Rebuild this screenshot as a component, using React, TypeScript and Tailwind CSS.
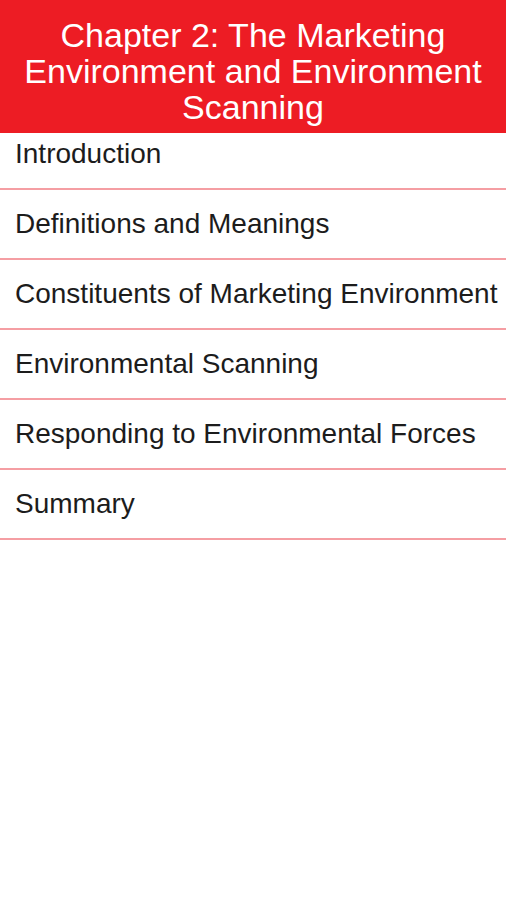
const topics = [
  "Definitions and Meanings",
  "Constituents of Marketing Environment",
  "Environmental Scanning",
  "Responding to Environmental Forces",
  "Summary",
];

export default function App() {
  return (
    <div className="min-h-[900px] w-full bg-white font-['Liberation_Sans',Arial,sans-serif]">
      <header className="h-[133px] bg-[#ed1c24] px-1 pt-[17px] text-center text-[34px] leading-[36px] text-white">
        Chapter 2: The Marketing Environment and Environment Scanning
      </header>
      <ul>
        <li className="h-[57px] border-b-2 border-[#f59ea3] pl-[15px] pt-[3px] text-[28px] leading-[36px] text-[#1c1c1c]">
          Introduction
        </li>
        {topics.map((t) => (
          <li
            key={t}
            className="flex h-[70px] items-center whitespace-nowrap border-b-2 border-[#f59ea3] pl-[15px] text-[28px] text-[#1c1c1c]"
          >
            {t}
          </li>
        ))}
      </ul>
    </div>
  );
}
